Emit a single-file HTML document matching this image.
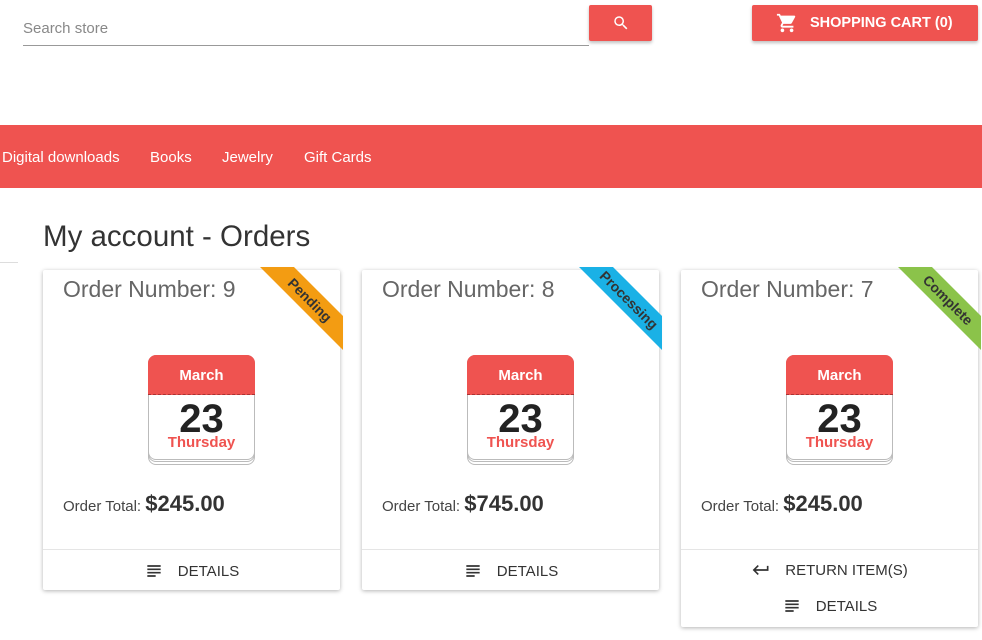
<!DOCTYPE html>
<html><head><meta charset="utf-8"><style>
*{box-sizing:border-box;margin:0;padding:0}
body{width:982px;height:640px;overflow:hidden;background:#fff;font-family:"Liberation Sans",Arial,sans-serif;color:#333;position:relative}
.search{position:absolute;left:23px;top:10px;width:566px;height:36px;border-bottom:1px solid #999;font-size:15px;color:#888;padding-top:10px}
.sbtn{position:absolute;left:589px;top:5px;width:63px;height:36px;background:#ef5350;border-radius:2px;box-shadow:0 2px 3px rgba(0,0,0,.25);display:flex;align-items:center;justify-content:center}
.cart{position:absolute;left:752px;top:5px;width:226px;height:36px;background:#ef5350;border-radius:2px;box-shadow:0 2px 3px rgba(0,0,0,.25);color:#fff;font-size:15px;display:flex;align-items:center;padding-left:24px}
.cart span{margin-left:12px;font-weight:bold;font-size:14.5px}
.nav{position:absolute;left:0;top:125px;width:982px;height:63px;background:#ef5350;color:#fff;font-size:15px}
.nav span{position:absolute;top:24px}
h1{position:absolute;left:43px;top:220px;font-size:29.5px;font-weight:normal;color:#333}
.hr{position:absolute;left:0;top:262px;width:18px;border-top:1px solid #ddd}
.card{position:absolute;top:270px;width:297px;background:#fff;box-shadow:0 1px 4px rgba(0,0,0,.3);border-radius:2px}
.on{position:absolute;left:20px;top:6px;font-size:23px;color:#666;font-weight:300}
.rib{position:absolute;right:-3px;top:-3px;width:85px;height:85px;overflow:hidden}
.rib div{position:absolute;left:-18px;top:21px;width:140px;height:24px;transform:rotate(45deg);text-align:center;font-size:14px;font-weight:bold;line-height:24px;color:#333}
.cal{position:absolute;left:105px;top:85px;width:107px;height:110px}
.cal .pg{position:absolute;left:0;width:107px;height:105px;border:1px solid #bbb;border-radius:8px;background:#fff}
.cal .top{position:absolute;left:0;top:0;width:107px;height:40px;background:#ef5350;border-radius:8px 8px 0 0;color:#fff;font-weight:bold;font-size:15px;text-align:center;line-height:42px;border-bottom:1px dashed #a33}
.cal .d{position:absolute;top:40px;width:107px;text-align:center;font-size:40px;font-weight:bold;color:#222;line-height:48px}
.cal .w{position:absolute;top:79px;width:107px;text-align:center;font-size:15px;font-weight:bold;color:#ef5350}
.tot{position:absolute;left:20px;top:221px;font-size:15px;color:#444}
.tot b{font-size:22px;font-weight:bold;color:#333}
.ft{position:absolute;left:0;top:279px;width:297px;border-top:1px solid #e5e5e5}
.act{position:absolute;left:0;width:297px;text-align:center;font-size:15px;color:#333;display:flex;justify-content:center;align-items:center}
.act svg{margin-right:14px}
</style></head><body>
<div class="search">Search store</div>
<div class="sbtn"><svg width="18" height="18" viewBox="0 0 24 24"><path fill="#fff" d="M15.5 14h-.79l-.28-.27A6.47 6.47 0 0 0 16 9.5 6.5 6.5 0 1 0 9.5 16c1.61 0 3.09-.59 4.23-1.57l.27.28v.79l5 4.99L20.49 19l-4.99-5zm-6 0C7.01 14 5 11.990 5 9.5S7.01 5 9.5 5 14 7.01 14 9.5 11.99 14 9.5 14z"/></svg></div>
<div class="cart"><svg width="22" height="22" viewBox="0 0 24 24"><path fill="#fff" d="M7 18c-1.1 0-1.99.9-1.99 2S5.9 22 7 22s2-.9 2-2-.9-2-2-2zM1 2v2h2l3.6 7.59-1.35 2.45c-.16.28-.25.61-.25.96 0 1.1.9 2 2 2h12v-2H7.42c-.14 0-.25-.11-.25-.25l.03-.12.9-1.630h7.45c.75 0 1.41-.41 1.75-1.03l3.58-6.49A1 1 0 0 0 20 4H5.21l-.94-2H1zm16 16c-1.1 0-1.99.9-1.99 2s.89 2 1.99 2 2-.9 2-2-.9-2-2-2z"/></svg><span>SHOPPING CART (0)</span></div>
<div class="nav"><span style="left:2px">Digital downloads</span><span style="left:150px">Books</span><span style="left:222px">Jewelry</span><span style="left:304px">Gift Cards</span></div>
<h1>My account - Orders</h1>
<div class="hr"></div>

<div class="card" style="left:43px;height:320px">
<div class="on">Order Number: 9</div>
<div class="rib"><div style="background:#f39c12">Pending</div></div>
<div class="cal"><div class="pg" style="top:5px"></div><div class="pg" style="top:2px"></div><div class="pg" style="top:0"></div><div class="top">March</div><div class="d">23</div><div class="w">Thursday</div></div>
<div class="tot">Order Total: <b>$245.00</b></div>
<div class="ft"></div>
<div class="act" style="top:291px"><svg width="20" height="20" viewBox="0 0 24 24"><path fill="#333" d="M14 17H4v2h10v-2zm6-8H4v2h16V9zM4 15h16v-2H4v2zM4 5v2h16V5H4z"/></svg>DETAILS</div>
</div>

<div class="card" style="left:362px;height:320px">
<div class="on">Order Number: 8</div>
<div class="rib"><div style="background:#1ab1e6">Processing</div></div>
<div class="cal"><div class="pg" style="top:5px"></div><div class="pg" style="top:2px"></div><div class="pg" style="top:0"></div><div class="top">March</div><div class="d">23</div><div class="w">Thursday</div></div>
<div class="tot">Order Total: <b>$745.00</b></div>
<div class="ft"></div>
<div class="act" style="top:291px"><svg width="20" height="20" viewBox="0 0 24 24"><path fill="#333" d="M14 17H4v2h10v-2zm6-8H4v2h16V9zM4 15h16v-2H4v2zM4 5v2h16V5H4z"/></svg>DETAILS</div>
</div>

<div class="card" style="left:681px;height:357px">
<div class="on">Order Number: 7</div>
<div class="rib"><div style="background:#8bc34a">Complete</div></div>
<div class="cal"><div class="pg" style="top:5px"></div><div class="pg" style="top:2px"></div><div class="pg" style="top:0"></div><div class="top">March</div><div class="d">23</div><div class="w">Thursday</div></div>
<div class="tot">Order Total: <b>$245.00</b></div>
<div class="ft"></div>
<div class="act" style="top:290px"><svg width="20" height="20" viewBox="0 0 24 24"><path fill="#333" d="M19 7v4H5.83l3.58-3.59L8 6l-6 6 6 6 1.41-1.41L5.83 13H21V7z"/></svg>RETURN ITEM(S)</div>
<div class="act" style="top:326px"><svg width="20" height="20" viewBox="0 0 24 24"><path fill="#333" d="M14 17H4v2h10v-2zm6-8H4v2h16V9zM4 15h16v-2H4v2zM4 5v2h16V5H4z"/></svg>DETAILS</div>
</div>
</body></html>
